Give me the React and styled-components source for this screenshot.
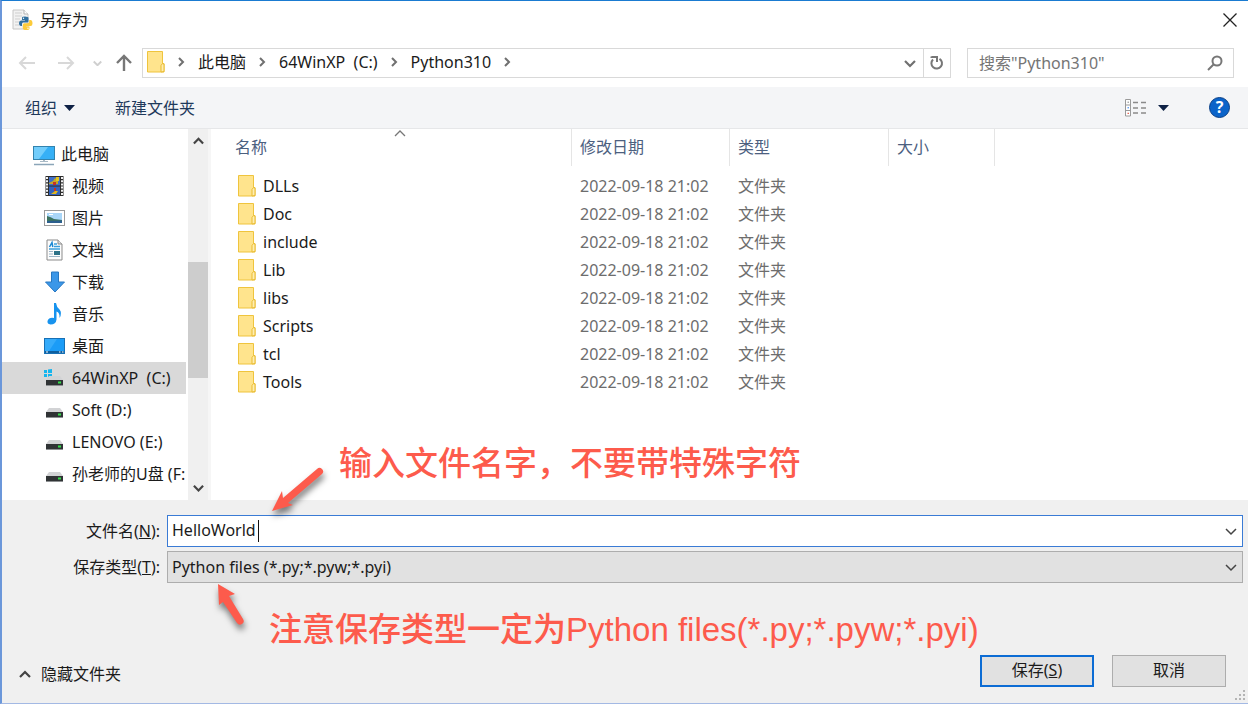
import React from "react";
import styled, { createGlobalStyle, css } from "styled-components";

const GlobalStyle = createGlobalStyle`
  *, *::before, *::after { box-sizing: border-box; }
  body { margin: 0; background: #fff; }
  body, button, input, select {
    font-family: "Noto Sans", "Noto Sans CJK SC", sans-serif;
    font-size: 16px;
    line-height: 24px;
  }
  svg { display: block; flex: none; }
`;

const Dialog = styled.main`
  display: flex;
  flex-direction: column;
  min-height: 100vh;
  overflow: hidden;
  border-top: 1px solid #1a7bd1;
  border-left: 2px solid #6b97da;
  border-bottom: 1px solid #a3b9e4;
  background: #fff;
  color: #1b1b1b;
`;

const PlainButton = styled.button`
  display: flex;
  align-items: center;
  justify-content: center;
  padding: 0;
  border: 0;
  background: none;
  color: inherit;
`;

const TitleBar = styled.header`
  display: flex;
  align-items: center;
  gap: 6px;
  height: 38px;
  padding: 0 10px;
`;

const Title = styled.h1`
  flex: 1;
  margin: 0;
  font-size: 16px;
  font-weight: 400;
  line-height: 24px;
`;

const NavRow = styled.nav`
  display: flex;
  align-items: center;
  padding: 9px 14px 9px 16px;
`;

const NavButtons = styled.div`
  display: flex;
  align-items: center;
  width: 124px;
`;

const NavButton = styled(PlainButton)`
  width: ${(p) => p.$width}px;
  height: 30px;
  justify-content: flex-start;
`;

const AddressBar = styled.div`
  display: flex;
  align-items: center;
  flex: 1;
  height: 30px;
  border: 1px solid #d9d9d9;
`;

const Crumbs = styled.ol`
  display: flex;
  align-items: center;
  flex: 1;
  height: 28px;
  margin: 0;
  padding: 0 0 2px 4px;
  list-style: none;
`;

const Crumb = styled.li`
  display: flex;
  align-items: center;
`;

const CrumbLink = styled.a`
  color: #1b1b1b;
  text-decoration: none;
  white-space: pre;
`;

const CrumbArrow = styled.span`
  display: flex;
  justify-content: center;
  width: 33px;
`;

const AddressButton = styled(PlainButton)`
  width: 27px;
  height: 28px;
  border-left: ${(p) => (p.$divided ? "1px solid #d9d9d9" : "0")};
`;

const SearchBox = styled.label`
  display: flex;
  align-items: center;
  width: 267px;
  height: 30px;
  margin-left: 16px;
  padding: 0 10px 0 11px;
  border: 1px solid #d9d9d9;
`;

const SearchInput = styled.input`
  flex: 1;
  min-width: 0;
  padding: 0;
  border: 0;
  outline: 0;
  background: none;
  &::placeholder { color: #757575; opacity: 1; }
`;

const Toolbar = styled.div`
  display: flex;
  align-items: center;
  height: 42px;
  padding: 0 18px 0 23px;
  border-bottom: 1px solid #e6e7e9;
  background: #f4f5f7;
  color: #1e395b;
`;

const ToolButton = styled(PlainButton)`
  gap: ${(p) => p.$gap || 7}px;
  margin-right: 40px;
`;

const Spacer = styled.div`
  flex: 1;
`;

const HelpButton = styled(PlainButton)`
  width: 21px;
  height: 21px;
  border: 1px solid #0a3f86;
  border-radius: 50%;
  background: #0b63c9;
  color: #fff;
  font-weight: 700;
  line-height: 19px;
`;

const Body = styled.div`
  display: flex;
  flex: 1;
`;

const Sidebar = styled.aside`
  display: flex;
  width: 209px;
  border-right: 3px solid #f6f6f6;
`;

const Tree = styled.ul`
  flex: 1;
  min-width: 0;
  margin: 0 2px 0 0;
  padding: 9px 0 0;
  list-style: none;
`;

const TreeRow = styled.li`
  display: flex;
  align-items: center;
  gap: 6px;
  height: 32px;
  padding-left: ${(p) => (p.$root ? 31 : 42)}px;
  overflow: hidden;
  white-space: pre;
  background: ${(p) => (p.$selected ? "#d9d9d9" : "transparent")};
`;

const ScrollBar = styled.div`
  display: flex;
  flex-direction: column;
  align-items: center;
  width: 20px;
  background: #f0f0f0;
`;

const ScrollButton = styled(PlainButton)`
  width: 20px;
  height: 24px;
`;

const ScrollTrack = styled.div`
  flex: 1;
  width: 100%;
  padding-top: 109px;
`;

const ScrollThumb = styled.div`
  height: 116px;
  background: #cdcdcd;
`;

const FilePane = styled.section`
  flex: 1;
  min-width: 0;
  padding-left: 16px;
`;

const FileTable = styled.table`
  width: 100%;
  border-collapse: collapse;
  table-layout: fixed;
`;

const Column = styled.col`
  width: ${(p) => (p.$width ? p.$width + "px" : "auto")};
`;

const HeadCell = styled.th`
  position: relative;
  height: 43px;
  padding: 0;
  vertical-align: top;
  text-align: left;
  font-weight: 400;
  color: #4c607f;
`;

const HeadLabel = styled.div`
  height: 37px;
  padding: 6px 8px;
  border-right: ${(p) => (p.$last ? "0" : "1px solid #e5e5e5")};
`;

const SortMark = styled.span`
  position: absolute;
  top: 0;
  left: 0;
  right: 0;
  display: flex;
  justify-content: center;
`;

const Cell = styled.td`
  height: 28px;
  padding: 0 0 0 8px;
  color: #6d6d6d;
  white-space: nowrap;
`;

const FileName = styled.div`
  display: flex;
  align-items: center;
  gap: 7px;
  padding-left: 3px;
  color: #1b1b1b;
`;

const Footer = styled.form`
  position: relative;
  padding-top: 15px;
  background: #f0f0f0;
`;

const Fields = styled.div`
  display: grid;
  grid-template-columns: 158px 1fr;
  align-items: center;
  gap: 4px 7px;
  padding-right: 5px;
`;

const FieldLabel = styled.label`
  text-align: right;
  white-space: nowrap;
`;

const field = css`
  display: flex;
  align-items: center;
  height: 32px;
  width: 100%;
  padding: 0 5px 0 4px;
`;

const NameField = styled.div`
  ${field}
  border: 1px solid #3a7bd5;
  background: #fff;
`;

const NameInput = styled.input`
  field-sizing: content;
  padding: 0 2px 2px 0;
  border: 0;
  outline: 0;
  background: none;
  color: #1b1b1b;
`;

const Caret = styled.span`
  width: 1px;
  height: 22px;
  background: #111;
`;

const TypeField = styled.div`
  display: grid;
  align-items: center;
  > * { grid-area: 1 / 1; }
  > svg { justify-self: end; margin-right: 6px; pointer-events: none; }
`;

const TypeSelect = styled.select`
  ${field}
  appearance: none;
  border: 1px solid #adadad;
  border-radius: 0;
  background: #e1e1e1;
  color: #1b1b1b;
`;

const Actions = styled.div`
  display: flex;
  align-items: center;
  gap: 18px;
  padding: 72px 22px 16px 17px;
`;

const HideButton = styled(PlainButton)`
  gap: 10px;
  padding-top: 6px;
`;

const ActionButton = styled.button`
  width: 114px;
  height: 32px;
  padding: 0 0 2px;
  border: ${(p) => (p.$primary ? "2px solid #0c6cd4" : "1px solid #adadad")};
  background: #e1e1e1;
  color: #1b1b1b;
`;

const Note = styled.p`
  position: absolute;
  top: ${(p) => p.$top}px;
  left: ${(p) => p.$left}px;
  margin: 0;
  color: #fd5b4c;
  font-family: "Liberation Sans", "Noto Sans CJK SC", sans-serif;
  font-size: 33px;
  font-weight: 500;
  line-height: 48px;
  white-space: nowrap;
  pointer-events: none;
`;

const NoteArrow = styled.svg`
  position: absolute;
  top: ${(p) => p.$top}px;
  left: ${(p) => p.$left}px;
  overflow: visible;
  fill: #fd5b4c;
  filter: drop-shadow(1px 5px 3px rgba(0, 0, 0, 0.5));
  pointer-events: none;
`;

const Grip = styled.svg`
  position: absolute;
  right: 2px;
  bottom: 2px;
`;

const chevrons = {
  up: "M1 7 L6 2 L11 7",
  down: "M1 2 L6 7 L11 2",
};

function Chevron({ dir, color = "#444", size = 12, weight = 2 }) {
  return (
    <svg width={size} height={(size * 9) / 12} viewBox="0 0 12 9" fill="none" stroke={color} strokeWidth={weight}>
      <path d={chevrons[dir]} />
    </svg>
  );
}

function RightArrow() {
  return (
    <svg width="7" height="10" viewBox="0 0 7 10" fill="none" stroke="#707070" strokeWidth="2">
      <path d="M1 1 L5 5 L1 9" />
    </svg>
  );
}

function Triangle() {
  return (
    <svg width="11" height="6" viewBox="0 0 11 6" fill="#0e2145">
      <path d="M0 0 H11 L5.5 6 Z" />
    </svg>
  );
}

function FolderIcon() {
  return (
    <svg width="18" height="22" viewBox="0 0 18 22">
      <path d="M.5 .5 H15.500 V12.500 H17 V21 H.5 Z" fill="#ffe48d" stroke="#efc43d" />
      <path d="M14 21 V14.500 L15.500 12.500 L17 13 V20.500 Z" fill="#ffeeb0" stroke="#e9bb31" />
    </svg>
  );
}

function PythonFileIcon() {
  return (
    <svg width="22" height="22" viewBox="0 0 22 22">
      <path d="M1 1 H12 L16 5 V20 H1 Z" fill="#f2f2f2" stroke="#c6c6c6" />
      <path d="M12 1 V5 H16" fill="#fff" stroke="#b5b5b5" />
      <path d="M3 4 H10 M3 7 H10 M3 10 H8 M3 13 H7 M3 16 H7" stroke="#cfcfcf" />
      <path d="M10 8.500 Q10 7.500 13 7.500 Q16.500 7.500 16.500 9 V12 Q16.500 13.500 15 13.500 H11 Q10 13.500 10 15 V17 H9 Q7 17 7 14 Q7 11.500 9 11.500 H13 V11 H10 Z" fill="#2f6f9f" />
      <path d="M17.200 11 H18.500 Q20.500 11 20.500 14.500 Q20.500 17 18.500 17 H14.500 V17.500 H17.500 V19.500 Q17.500 21 14 21 Q10.800 21 10.800 19 V16 Q10.800 14.300 12.500 14.300 H15.500 Q17.200 14.300 17.200 12.500 Z" fill="#fccb3a" />
      <circle cx="11.500" cy="9.200" r=".7" fill="#fff" />
      <circle cx="16" cy="19.300" r=".7" fill="#fff" />
    </svg>
  );
}

function PcIcon() {
  return (
    <svg width="22" height="24" viewBox="0 -4 22 24">
      <rect x=".5" y=".5" width="21" height="13" fill="#36b0f6" stroke="#3283ae" />
      <path d="M1 1 H15 L6 13 H1 Z" fill="#72cdfb" />
      <path d="M10 14 H12 V15 H15 V16 H7 V15 H10 Z" fill="#a9bac6" />
      <path d="M1 18.500 H21" stroke="#8ba5b8" strokeWidth="1.500" />
    </svg>
  );
}

function VideoIcon() {
  return (
    <svg width="22" height="20" viewBox="0 0 22 20">
      <rect x="1.500" width="18" height="20" fill="#2d2d2d" />
      <path d="M3 1 V20 M18 1 V20" stroke="#f1f1f1" strokeWidth="2" strokeDasharray="2 1.200" />
      <rect x="5" y="1" width="11" height="8.500" fill="#3f6fc9" />
      <rect x="5" y="10.500" width="11" height="8.500" fill="#3263bd" />
      <path d="M5 7 L9 5 L11 2 L14 4 V8 H5 Z" fill="#c4a626" />
      <path d="M12 1 H15 V5 H12 Z" fill="#e6c51f" />
      <path d="M9 6 H12 V9 H9 Z" fill="#c43228" />
      <path d="M7 18 L11 15 L14 15 L12 18 Z" fill="#e2b71c" />
      <path d="M10 12 H12 V15 H10 Z" fill="#c43228" />
    </svg>
  );
}

function PictureIcon() {
  return (
    <svg width="22" height="16" viewBox="0 0 22 16">
      <rect x=".5" y=".5" width="20" height="15" fill="#fff" stroke="#9a9a9a" />
      <rect x="3" y="3" width="15" height="10" fill="#a9d6f8" />
      <path d="M3 6 Q7 7 10 9 L18 10 V13 H3 Z" fill="#3c7360" />
      <path d="M3 11 L18 10.500 V13 H3 Z" fill="#2c5f8f" />
      <path d="M5 4.500 H9" stroke="#fff" />
    </svg>
  );
}

function DocIcon() {
  return (
    <svg width="22" height="22" viewBox="0 0 22 22">
      <path d="M3 1 H14 L18 5 V21 H3 Z" fill="#fcfcfc" stroke="#8b8b8b" />
      <path d="M14 1 V5 H18" fill="#ddd" stroke="#8b8b8b" />
      <path d="M5.500 8 L8 3.500 L8.800 8" fill="none" stroke="#1b87d2" strokeWidth="1.500" />
      <path d="M10 5 H13 M10 7.500 H16 M5 10 H16" stroke="#3a9edb" strokeWidth="1.300" />
      <path d="M5 12.500 H9 M5 15 H9 M5 17.500 H16" stroke="#9bb5c7" />
      <rect x="10" y="12" width="6" height="4" fill="#2b7187" />
    </svg>
  );
}

function DownloadIcon() {
  return (
    <svg width="22" height="22" viewBox="0 0 22 22">
      <path d="M7.500 1 H14.500 V11 H20.500 L11 21 L1.500 11 H7.500 Z" fill="#3b97e8" stroke="#2878c2" />
    </svg>
  );
}

function MusicIcon() {
  return (
    <svg width="22" height="22" viewBox="0 0 22 22" fill="#1793ee">
      <path d="M10 0 H12 Q12.500 4 15.500 6.500 Q18.500 10 15.500 15 Q16 9.500 12.500 8.500 V16.500 Q12 21.500 6.500 21.500 Q3 21 3.500 18 Q5 14 10 15 Z" />
    </svg>
  );
}

function DesktopIcon() {
  return (
    <svg width="22" height="16" viewBox="0 0 22 16">
      <rect x=".5" y=".5" width="20" height="15" fill="#1b9cf7" stroke="#1770b5" />
      <path d="M1 1 H13 L5 13 H1 Z" fill="#35abfa" />
      <rect x="1" y="13" width="19" height="2" fill="#0f5f9e" />
      <path d="M2 14 H4 M15 14 H16.500 M18 14 H19.500" stroke="#fff" />
    </svg>
  );
}

function DriveIcon({ system }) {
  return (
    <svg width="22" height="20" viewBox="0 0 22 20">
      {system && (
        <path d="M0 2 H3 V5 H0 Z M4 1.500 L8 1 V5 H4 Z M0 6 H3 V9 H0 Z M4 6 H8 V9.500 L4 9 Z" fill="#16b5ee" />
      )}
      <path d="M5 8 H16 L19 12 H2 Z" fill="#d2d3d5" />
      <rect x="2" y="12" width="17" height="6" fill="#303335" />
      <path d="M2 17.500 H19" stroke="#8d9092" />
      <rect x="14" y="13.500" width="3" height="2" fill="#35e04a" />
    </svg>
  );
}

const tree = [
  { name: "此电脑", icon: <PcIcon />, root: true },
  { name: "视频", icon: <VideoIcon /> },
  { name: "图片", icon: <PictureIcon /> },
  { name: "文档", icon: <DocIcon /> },
  { name: "下载", icon: <DownloadIcon /> },
  { name: "音乐", icon: <MusicIcon /> },
  { name: "桌面", icon: <DesktopIcon /> },
  { name: "64WinXP  (C:)", icon: <DriveIcon system />, selected: true },
  { name: "Soft (D:)", icon: <DriveIcon /> },
  { name: "LENOVO (E:)", icon: <DriveIcon /> },
  { name: "孙老师的U盘 (F:", icon: <DriveIcon /> },
];

const crumbs = ["此电脑", "64WinXP  (C:)", "Python310"];
const folders = ["DLLs", "Doc", "include", "Lib", "libs", "Scripts", "tcl", "Tools"];

export default function App() {
  return (
    <Dialog>
      <GlobalStyle />
      <TitleBar>
        <PythonFileIcon />
        <Title>另存为</Title>
        <PlainButton type="button" aria-label="关闭">
          <svg width="16" height="16" viewBox="0 0 16 16" stroke="#222" strokeWidth="1.300">
            <path d="M1.500 1.500 L14.500 14.500 M14.500 1.500 L1.500 14.500" />
          </svg>
        </PlainButton>
      </TitleBar>

      <NavRow>
        <NavButtons>
          <NavButton type="button" $width={39} aria-label="后退">
            <svg width="18" height="16" viewBox="0 0 18 16" fill="none" stroke="#d8d8d8" strokeWidth="2">
              <path d="M17 8 H2 M8 2 L2 8 L8 14" />
            </svg>
          </NavButton>
          <NavButton type="button" $width={36} aria-label="前进">
            <svg width="18" height="16" viewBox="0 0 18 16" fill="none" stroke="#d8d8d8" strokeWidth="2">
              <path d="M1 8 H16 M10 2 L16 8 L10 14" />
            </svg>
          </NavButton>
          <NavButton type="button" $width={22} aria-label="最近的位置">
            <Chevron dir="down" size={9} color="#cfcfcf" weight={2.5} />
          </NavButton>
          <NavButton type="button" $width={26} aria-label="向上">
            <svg width="18" height="18" viewBox="0 0 18 18" fill="none" stroke="#777" strokeWidth="2.400">
              <path d="M9 17 V2 M2 9 L9 2 L16 9" />
            </svg>
          </NavButton>
        </NavButtons>
        <AddressBar>
          <Crumbs>
            <Crumb>
              <FolderIcon />
              <CrumbArrow><RightArrow /></CrumbArrow>
            </Crumb>
            {crumbs.map((name) => (
              <Crumb key={name}>
                <CrumbLink href="#">{name}</CrumbLink>
                <CrumbArrow><RightArrow /></CrumbArrow>
              </Crumb>
            ))}
          </Crumbs>
          <AddressButton type="button" aria-label="历史记录">
            <Chevron dir="down" color="#707070" weight={2.2} />
          </AddressButton>
          <AddressButton type="button" $divided aria-label="刷新">
            <svg width="14" height="16" viewBox="0 0 14 16" fill="none" stroke="#777" strokeWidth="2">
              <path d="M9.500 3.800 A5.300 5.300 0 1 1 3 4.500" />
              <path d="M1.500 1.500 V2 H7 V7" />
            </svg>
          </AddressButton>
        </AddressBar>
        <SearchBox>
          <SearchInput type="text" aria-label="搜索" placeholder={'搜索"Python310"'} />
          <svg width="16" height="16" viewBox="0 0 16 16" fill="none" stroke="#777" strokeWidth="2">
            <circle cx="10" cy="6" r="4.500" />
            <path d="M7 9 L1 15" />
          </svg>
        </SearchBox>
      </NavRow>

      <Toolbar>
        <ToolButton type="button">组织<Triangle /></ToolButton>
        <ToolButton type="button">新建文件夹</ToolButton>
        <Spacer />
        <ToolButton type="button" $gap={11} aria-label="更改视图">
          <svg width="23" height="18" viewBox="0 0 23 18">
            <path d="M1.500 .5 H6.500 V17 H1.500 Z M1.500 6 H6.500 M1.500 11.500 H6.500" fill="#fff" stroke="#9a9a9a" />
            <path d="M9 3.500 H14 M17 3.500 H22 M9 9 H14 M17 9 H22 M9 14 H14 M17 14 H22" stroke="#8a8a8a" strokeWidth="1.300" />
            <path d="M3.500 3.200 H5" stroke="#888" />
            <path d="M3.500 8.800 H5" stroke="#2a7cf0" />
            <path d="M3.500 14.300 H5" stroke="#e03c2c" />
          </svg>
          <Triangle />
        </ToolButton>
        <HelpButton type="button">?</HelpButton>
      </Toolbar>

      <Body>
        <Sidebar>
          <Tree>
            {tree.map((item) => (
              <TreeRow key={item.name} $root={item.root} $selected={item.selected}>
                {item.icon}
                {item.name}
              </TreeRow>
            ))}
          </Tree>
          <ScrollBar>
            <ScrollButton type="button" aria-label="向上滚动"><Chevron dir="up" size={11} weight={2.4} /></ScrollButton>
            <ScrollTrack><ScrollThumb /></ScrollTrack>
            <ScrollButton type="button" aria-label="向下滚动"><Chevron dir="down" size={11} weight={2.4} /></ScrollButton>
          </ScrollBar>
        </Sidebar>
        <FilePane>
          <FileTable>
            <colgroup>
              <Column $width={345} />
              <Column $width={158} />
              <Column $width={159} />
              <Column $width={106} />
              <Column />
            </colgroup>
            <thead>
              <tr>
                <HeadCell>
                  <HeadLabel>名称</HeadLabel>
                  <SortMark><Chevron dir="up" color="#777" weight={1.3} /></SortMark>
                </HeadCell>
                <HeadCell><HeadLabel>修改日期</HeadLabel></HeadCell>
                <HeadCell><HeadLabel>类型</HeadLabel></HeadCell>
                <HeadCell><HeadLabel>大小</HeadLabel></HeadCell>
                <HeadCell><HeadLabel $last /></HeadCell>
              </tr>
            </thead>
            <tbody>
              {folders.map((name) => (
                <tr key={name}>
                  <Cell><FileName><FolderIcon />{name}</FileName></Cell>
                  <Cell>2022-09-18 21:02</Cell>
                  <Cell>文件夹</Cell>
                  <Cell />
                  <Cell />
                </tr>
              ))}
            </tbody>
          </FileTable>
        </FilePane>
      </Body>

      <Footer onSubmit={(e) => e.preventDefault()}>
        <Fields>
          <FieldLabel htmlFor="file-name">文件名(<u>N</u>):</FieldLabel>
          <NameField>
            <NameInput id="file-name" type="text" defaultValue="HelloWorld" />
            <Caret />
            <Spacer />
            <Chevron dir="down" weight={1.5} />
          </NameField>
          <FieldLabel htmlFor="file-type">保存类型(<u>T</u>):</FieldLabel>
          <TypeField>
            <TypeSelect id="file-type">
              <option>Python files (*.py;*.pyw;*.pyi)</option>
            </TypeSelect>
            <Chevron dir="down" weight={1.5} />
          </TypeField>
        </Fields>
        <Actions>
          <HideButton type="button"><Chevron dir="up" weight={2.2} />隐藏文件夹</HideButton>
          <Spacer />
          <ActionButton type="submit" $primary>保存(<u>S</u>)</ActionButton>
          <ActionButton type="button">取消</ActionButton>
        </Actions>
        <NoteArrow $top={-32} $left={268} width="56" height="46" viewBox="0 0 56 46">
          <path d="M2 43 L12 23 L13 30 L47 1 A3.500 3.500 0 0 1 52 6 L18 35 L23 37 Z" />
        </NoteArrow>
        <Note $top={-60} $left={337}>输入文件名字，不要带特殊字符</Note>
        <NoteArrow $top={84} $left={214} width="30" height="42" viewBox="0 0 30 42">
          <path d="M2 0 L19 10 L13 12 L27 35 A3.500 3.500 0 0 1 21 39 L7 18 L3 21 Z" />
        </NoteArrow>
        <Note $top={106} $left={267}>注意保存类型一定为Python files(*.py;*.pyw;*.pyi)</Note>
        <Grip width="11" height="11" viewBox="0 0 11 11" fill="#b4b4b4">
          <path d="M8 0 H10 V2 H8 Z M4 4 H6 V6 H4 Z M8 4 H10 V6 H8 Z M0 8 H2 V10 H0 Z M4 8 H6 V10 H4 Z M8 8 H10 V10 H8 Z" />
        </Grip>
      </Footer>
    </Dialog>
  );
}
